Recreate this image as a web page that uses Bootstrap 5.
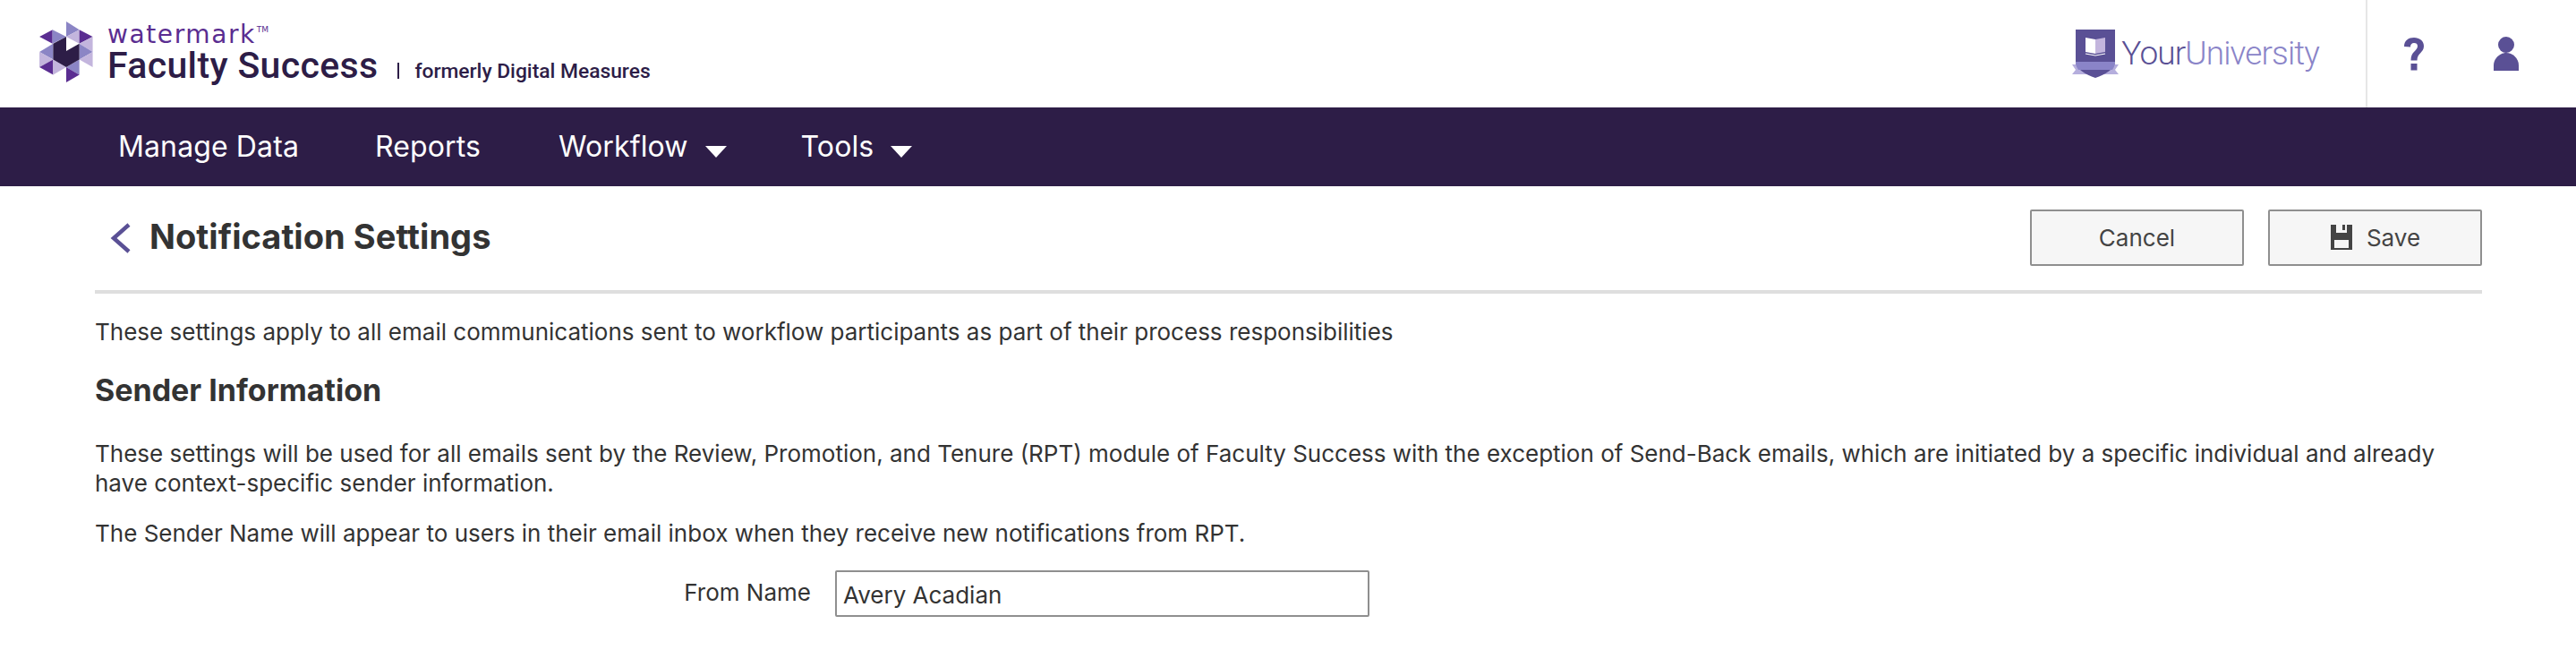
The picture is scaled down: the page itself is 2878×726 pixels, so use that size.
<!DOCTYPE html>
<html lang="en"><head><meta charset="utf-8"><title>Notification Settings</title>
<link href="https://cdn.jsdelivr.net/npm/bootstrap@5.3.0/dist/css/bootstrap.min.css" rel="stylesheet">
<style>
body{font-family:Inter,"Liberation Sans",sans-serif;color:#333;font-size:26px;line-height:33px;background:#fff;overflow:hidden}
.top-bar{height:120px}
.brand-mark{width:60px;height:68px;margin:-4px 16px 0 44px}
.brand-words{width:640px;margin-top:10px}
.wm-name{font-family:"DejaVu Sans",sans-serif;font-size:28px;letter-spacing:1.6px;line-height:22px;color:#5a2d91;height:22px;margin-top:1px}
.wm-name sup{font-size:9px;top:-12px;color:#5a2d91;letter-spacing:0;vertical-align:baseline;position:relative;margin-left:1px}
.fs-name{font-family:Roboto,sans-serif;font-weight:500;font-size:41px;line-height:46px;color:#2d1d47;letter-spacing:.35px}
.fs-sep{display:inline-block;width:2px;height:18px;background:#2d1d47;margin:0 17px 0 22px;vertical-align:-1px}
.fs-old{font-family:Roboto,sans-serif;font-weight:500;font-size:22.800px;letter-spacing:0;color:#2d1d47}
.uni-mark{width:52px;height:54px}
.uni-name{font-family:Roboto,sans-serif;font-weight:300;font-size:37px;letter-spacing:-.9px;line-height:46px;margin:0 52px 0 3px;color:#8a84c8}
.uni-name span{color:#5a5095}
.tool-zone{width:235px;height:120px;border-left:2px solid #e6e6e6}
.help-glyph{width:24px;height:38px;margin-left:40px}
.user-glyph{width:28px;height:38px;margin-left:77px}
.main-nav{background:#2d1d47;height:88px;padding:0 0 0 132px}
.main-nav .navbar-nav .nav-link{color:#fff;font-size:32px;line-height:40px;padding:0;margin-right:85px;letter-spacing:.12px}
.main-nav .navbar-nav .nav-item:nth-child(2) .nav-link{margin-right:87px}
.main-nav .navbar-nav .nav-link.with-caret{margin-right:83px}
.nav-caret{display:inline-block;width:0;height:0;border-left:12px solid transparent;border-right:12px solid transparent;border-top:13px solid #fff;margin-left:19px;vertical-align:-1px}
.page-body{padding:0 105px 0 106px}
.title-row{height:120px;border-bottom:4px solid #dedede;padding-bottom:4px}
.back-mark{width:24px;height:34px;margin:4px 20px 0 17px}
.page-title{font-size:38px;line-height:46px;font-weight:700;margin:0;color:#333;letter-spacing:.05px}
.act-wrap{margin-top:26px;gap:27px}
.act-btn{width:239px;height:63px;background:#f6f6f6;border:2px solid #8f8f8f;border-radius:2px;color:#444;font-size:26px;line-height:30px;padding:0}
.act-btn:hover{background:#f6f6f6;border-color:#8f8f8f;color:#444}
.save-icon{width:26px;height:28px;margin-right:15px;vertical-align:-4px}
.intro-line{margin:26px 0 0}
.sub-title{font-size:34px;line-height:40px;font-weight:700;margin:29px 0 0;color:#333}
.desc-one{margin:34px 0 0}
.desc-two{margin:23px 0 0}
.from-row{margin-top:25px}
.from-label{width:827px;padding-right:27px;text-align:right;margin:0 0 3px}
.from-input{width:597px;height:52px;border:2px solid #8f8f8f;border-radius:2px;font-size:26px;padding:2px 7px 0;color:#333;font-family:inherit}
</style></head>
<body>
<header class="top-bar d-flex align-items-center">
<svg class="brand-mark flex-shrink-0" viewBox="72 55 176 200" aria-hidden="true">
<polygon points="72,105 115,82 115,128" fill="#5a2d91"/>
<polygon points="115,82 160,105 115,128" fill="#8b85c5"/>
<polygon points="160,55 203,82 160,105" fill="#8b85c5"/>
<polygon points="203,82 160,105 203,128" fill="#c3b5dd"/>
<polygon points="203,82 247,105 203,128" fill="#5a2d91"/>
<polygon points="247,105 247,155 203,128" fill="#c3b5dd"/>
<polygon points="203,128 247,155 203,180" fill="#8b85c5"/>
<polygon points="247,155 247,205 203,180" fill="#c3b5dd"/>
<polygon points="117,128 72,155 117,180" fill="#8b85c5"/>
<polygon points="72,155 117,180 72,205" fill="#c3b5dd"/>
<polygon points="117,180 72,205 117,230" fill="#5a2d91"/>
<polygon points="117,180 160,205 117,230" fill="#c3b5dd"/>
<polygon points="160,205 203,180 203,230" fill="#8b85c5"/>
<polygon points="160,205 203,230 160,255" fill="#5a2d91"/>
<polygon points="117,128 160,105 160,152 203,128 203,180 160,205 117,180" fill="#2d1d47"/>
</svg>
<div class="brand-words">
<div class="wm-name">watermark<sup>TM</sup></div>
<div class="fs-name text-nowrap">Faculty Success<span class="fs-sep"></span><span class="fs-old">formerly Digital Measures</span></div>
</div>
<div class="ms-auto d-flex align-items-center">
<svg class="uni-mark flex-shrink-0" viewBox="0 0 52 54" aria-hidden="true">
<path d="M0 39H52L48 45 52 50H0L4 45Z" fill="#b5aedd"/>
<path d="M4 0H48V36C48 44 37 50 26 54 15 50 4 44 4 36Z" fill="#5a5095"/>
<path d="M4 36H48C48 39 47 42 45 45H7C5 42 4 39 4 36Z" fill="#8a84c8"/>
<path d="M15 9 26 11V27L15 25Z" fill="#fff"/><path d="M26 11 37 9V25L26 27Z" fill="#c3b5dd"/>
<path d="M15 27 26 29 37 27" fill="none" stroke="#fff" stroke-width="1.2"/>
</svg>
<div class="uni-name"><span>Your</span>University</div>
<div class="tool-zone d-flex align-items-center">
<svg class="help-glyph" viewBox="0 0 24 38" aria-hidden="true"><path d="M1 11C1 4 6 1 12 1S23 4.500 23 10.500C23 18 15.500 18 15.500 26.500H8.500C8.500 16 16 16 16 10.500 16 8 14.500 7 12 7S8 8.500 8 11.500Z" fill="#5a5095"/><rect x="8.500" y="30" width="7" height="7.500" fill="#5a5095"/></svg>
<svg class="user-glyph" viewBox="0 0 28 38" aria-hidden="true"><circle cx="14" cy="9" r="9" fill="#5a5095"/><path d="M0 38V32C0 24 7 18 14 18S28 24 28 32V38Z" fill="#5a5095"/></svg>
</div>
</div>
</header>
<nav class="main-nav navbar navbar-expand">
<ul class="navbar-nav align-items-center">
<li class="nav-item"><a class="nav-link" href="#">Manage Data</a></li>
<li class="nav-item"><a class="nav-link" href="#">Reports</a></li>
<li class="nav-item"><a class="nav-link with-caret" href="#">Workflow<span class="nav-caret"></span></a></li>
<li class="nav-item"><a class="nav-link with-caret" href="#">Tools<span class="nav-caret"></span></a></li>
</ul>
</nav>
<main class="page-body">
<div class="title-row d-flex align-items-center">
<svg class="back-mark flex-shrink-0" viewBox="0 0 24 34" aria-hidden="true"><path d="M21 2 4 17 21 32" fill="none" stroke="#5a5095" stroke-width="4.500"/></svg>
<h1 class="page-title">Notification Settings</h1>
<div class="ms-auto d-flex align-self-start act-wrap">
<button type="button" class="btn act-btn">Cancel</button>
<button type="button" class="btn act-btn"><svg class="save-icon" viewBox="0 0 26 28" aria-hidden="true"><path fill-rule="evenodd" d="M1 0H25V28H1ZM5 17V26H21V17ZM7 0V9H19V0H17V6H14V0Z" fill="#444"/></svg>Save</button>
</div>
</div>
<p class="intro-line">These settings apply to all email communications sent to workflow participants as part of their process responsibilities</p>
<h2 class="sub-title">Sender Information</h2>
<p class="desc-one">These settings will be used for all emails sent by the Review, Promotion, and Tenure (RPT) module of Faculty Success with the exception of Send-Back emails, which are initiated by a specific individual and already have context-specific sender information.</p>
<p class="desc-two">The Sender Name will appear to users in their email inbox when they receive new notifications from RPT.</p>
<div class="from-row d-flex align-items-center">
<label class="from-label" for="from-name">From Name</label>
<input id="from-name" class="form-control from-input" type="text" value="Avery Acadian">
</div>
</main>
<script src="https://cdn.jsdelivr.net/npm/bootstrap@5.3.0/dist/js/bootstrap.bundle.min.js"></script>
</body></html>
